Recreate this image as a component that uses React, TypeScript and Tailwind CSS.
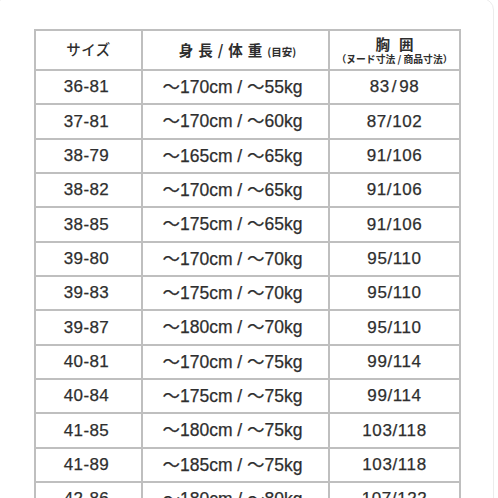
import React from "react";

const rows: [string, string, string][] = [
  ["36-81", "～170cm / ～55kg", "83/98"],
  ["37-81", "～170cm / ～60kg", "87/102"],
  ["38-79", "～165cm / ～65kg", "91/106"],
  ["38-82", "～170cm / ～65kg", "91/106"],
  ["38-85", "～175cm / ～65kg", "91/106"],
  ["39-80", "～170cm / ～70kg", "95/110"],
  ["39-83", "～175cm / ～70kg", "95/110"],
  ["39-87", "～180cm / ～70kg", "95/110"],
  ["40-81", "～170cm / ～75kg", "99/114"],
  ["40-84", "～175cm / ～75kg", "99/114"],
  ["41-85", "～180cm / ～75kg", "103/118"],
  ["41-89", "～185cm / ～75kg", "103/118"],
  ["42-86", "～180cm / ～80kg", "107/122"],
];

const font = { fontFamily: '"Liberation Sans", "Noto Sans CJK JP", sans-serif' };
const jp = { fontFamily: '"Noto Sans CJK JP", sans-serif' };

function Ratio({ v }: { v: string }) {
  const [a, b] = v.split("/");
  const short = v.length <= 5;
  return (
    <span className="text-[17px] tracking-[0.6px] [-webkit-text-stroke:0.25px_currentColor]">
      {a}
      <span className={short ? "mx-[2px]" : ""}>/</span>
      {b}
    </span>
  );
}

export default function App() {
  return (
    <div className="w-[498px] h-[498px] overflow-hidden bg-white relative">
      <div className="absolute left-[-6px] top-[-2px] w-[500px] h-[520px] border border-[#ececec] rounded-[12px] pointer-events-none" />
      <div className="pl-[34px] pt-[29px]">
        <div className="w-[427px] border-2 border-[#bfbfbf] text-[#2e2e2e]" style={font}>
          <div className="flex h-[40px] border-b-2 border-[#bfbfbf]">
            <div className="w-[107px] border-r-2 border-[#bfbfbf] flex items-center justify-center pb-[2px]">
              <span className="text-[14.5px] font-medium tracking-[0.5px]" style={jp}>
                サイズ
              </span>
            </div>
            <div className="w-[187px] border-r-2 border-[#bfbfbf] flex items-center justify-center pl-[4px]" style={jp}>
              <span className="text-[14.5px] font-bold tracking-[5px]">身長/体重</span>
              <span className="text-[10.5px] font-bold mt-[3px]">(目安)</span>
            </div>
            <div className="flex-1 flex flex-col items-center justify-center" style={jp}>
              <span className="text-[14.5px] font-bold leading-[17px] tracking-[9px] pl-[9px]">胸囲</span>
              <span className="text-[9.8px] font-bold leading-[13px] mt-[1px]">（ヌード寸法 / 商品寸法）</span>
            </div>
          </div>
          {rows.map((r, i) => (
            <div key={i} className="flex h-[34.33px] border-b-2 border-[#bfbfbf]">
              <div className="w-[107px] border-r-2 border-[#bfbfbf] flex items-center justify-center pr-[4px]">
                <span className="text-[17px] tracking-[0.4px] [-webkit-text-stroke:0.25px_currentColor]">{r[0]}</span>
              </div>
              <div className="w-[187px] border-r-2 border-[#bfbfbf] flex items-center justify-center pr-[6px]">
                <span className="text-[17.5px] [-webkit-text-stroke:0.25px_currentColor]">{r[1]}</span>
              </div>
              <div className="flex-1 flex items-center justify-center">
                <Ratio v={r[2]} />
              </div>
            </div>
          ))}
        </div>
      </div>
    </div>
  );
}
